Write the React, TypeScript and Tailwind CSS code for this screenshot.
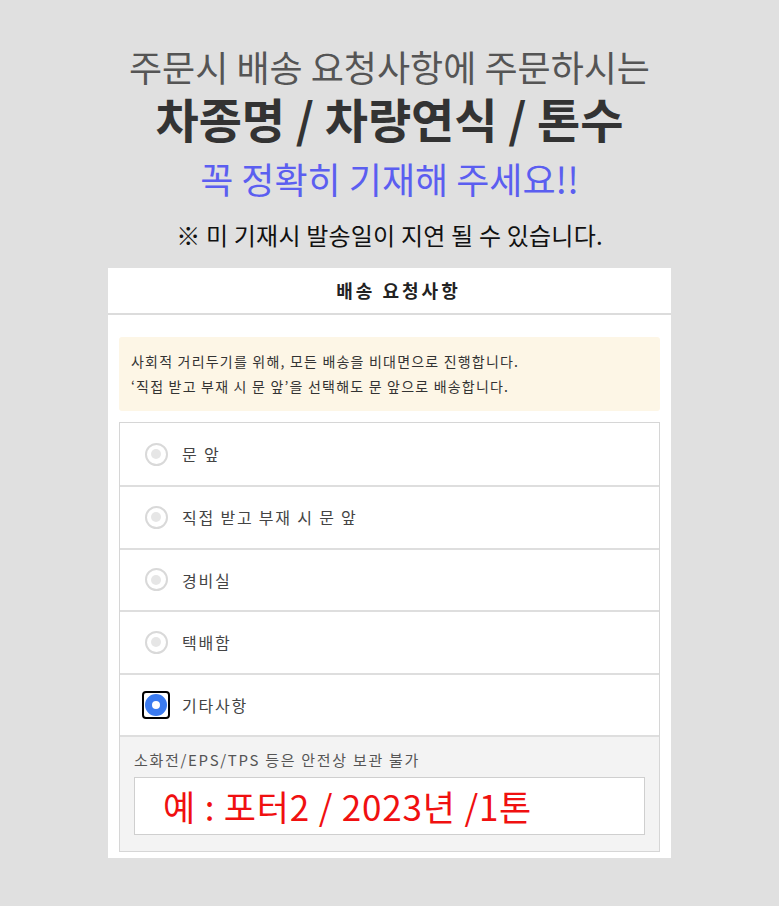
import React from 'react';

const font = { fontFamily: '"Noto Sans CJK KR", "Noto Sans", sans-serif' };

const options = ['문 앞', '직접 받고 부재 시 문 앞', '경비실', '택배함', '기타사항'];

function Radio({ checked }: { checked: boolean }) {
  if (checked) {
    return (
      <span className="flex h-[28px] w-[28px] items-center justify-center rounded-[4px] border-[2px] border-black">
        <span className="h-[22px] w-[22px] rounded-full border-[7px] border-[#3b7bf0] bg-white" />
      </span>
    );
  }
  return (
    <span className="flex h-[28px] w-[28px] items-center justify-center">
      <span className="flex h-[23px] w-[23px] items-center justify-center rounded-full border-[2px] border-[#d9d9d9] bg-white">
        <span className="h-[10px] w-[10px] rounded-full bg-[#e6e6e6]" />
      </span>
    </span>
  );
}

export default function App() {
  return (
    <div className="min-h-[906px] w-[779px] bg-[#e0e0e0] pt-[45px] text-center" style={font}>
      <p className="text-[36px] leading-[42px] text-[#555555]">주문시 배송 요청사항에 주문하시는</p>
      <p className="mt-[2px] text-[47px] font-bold leading-[58px] text-[#333333]">차종명 / 차량연식 / 톤수</p>
      <p className="mt-[3px] text-[36px] leading-[56px] text-[#5b5ef0]">꼭 정확히 기재해 주세요!!</p>
      <p className="mt-[9px] text-[24px] leading-[40px] tracking-[0.2px] text-[#111111]">※ 미 기재시 발송일이 지연 될 수 있습니다.</p>

      <div className="mx-auto mt-[13px] w-[563px] bg-white pb-[6px] text-left">
        <div className="h-[47px] border-b-[2px] border-[#dcdcdc] pl-[18px] text-center text-[18px] font-bold leading-[45px] tracking-[3px] text-[#222222]">
          배송 요청사항
        </div>
        <div className="px-[11px] pt-[22px]">
          <div className="rounded-[3px] bg-[#fdf6e6] px-[12px] py-[12px] text-[14px] leading-[25px] tracking-[1.2px] text-[#333333]">
            <p>사회적 거리두기를 위해, 모든 배송을 비대면으로 진행합니다.</p>
            <p>‘직접 받고 부재 시 문 앞’을 선택해도 문 앞으로 배송합니다.</p>
          </div>
          <div className="mt-[11px] border border-[#d6d6d6]">
            {options.map((o, i) => (
              <div
                key={o}
                className={`flex items-center gap-[12px] pl-[22px] text-[16px] tracking-[1.8px] text-[#444444] ${i > 0 ? 'h-[62.5px] border-t-[2px] border-[#dedede]' : 'h-[62px]'}`}
              >
                <Radio checked={i === 4} />
                <span>{o}</span>
              </div>
            ))}
            <div className="border-t-[2px] border-[#dedede] bg-[#f3f3f3] px-[14px] pb-[16px] pt-[11px]">
              <p className="text-[15px] leading-[24px] tracking-[1.7px] text-[#555555]">소화전/EPS/TPS 등은 안전상 보관 불가</p>
              <div className="mt-[5px] h-[58px] border border-[#cfcfcf] bg-white pl-[28px] text-[35px] leading-[56px] tracking-[0.8px] text-[#f01010]">
                예 : 포터2 / 2023년 /1톤
              </div>
            </div>
          </div>
        </div>
      </div>
    </div>
  );
}
